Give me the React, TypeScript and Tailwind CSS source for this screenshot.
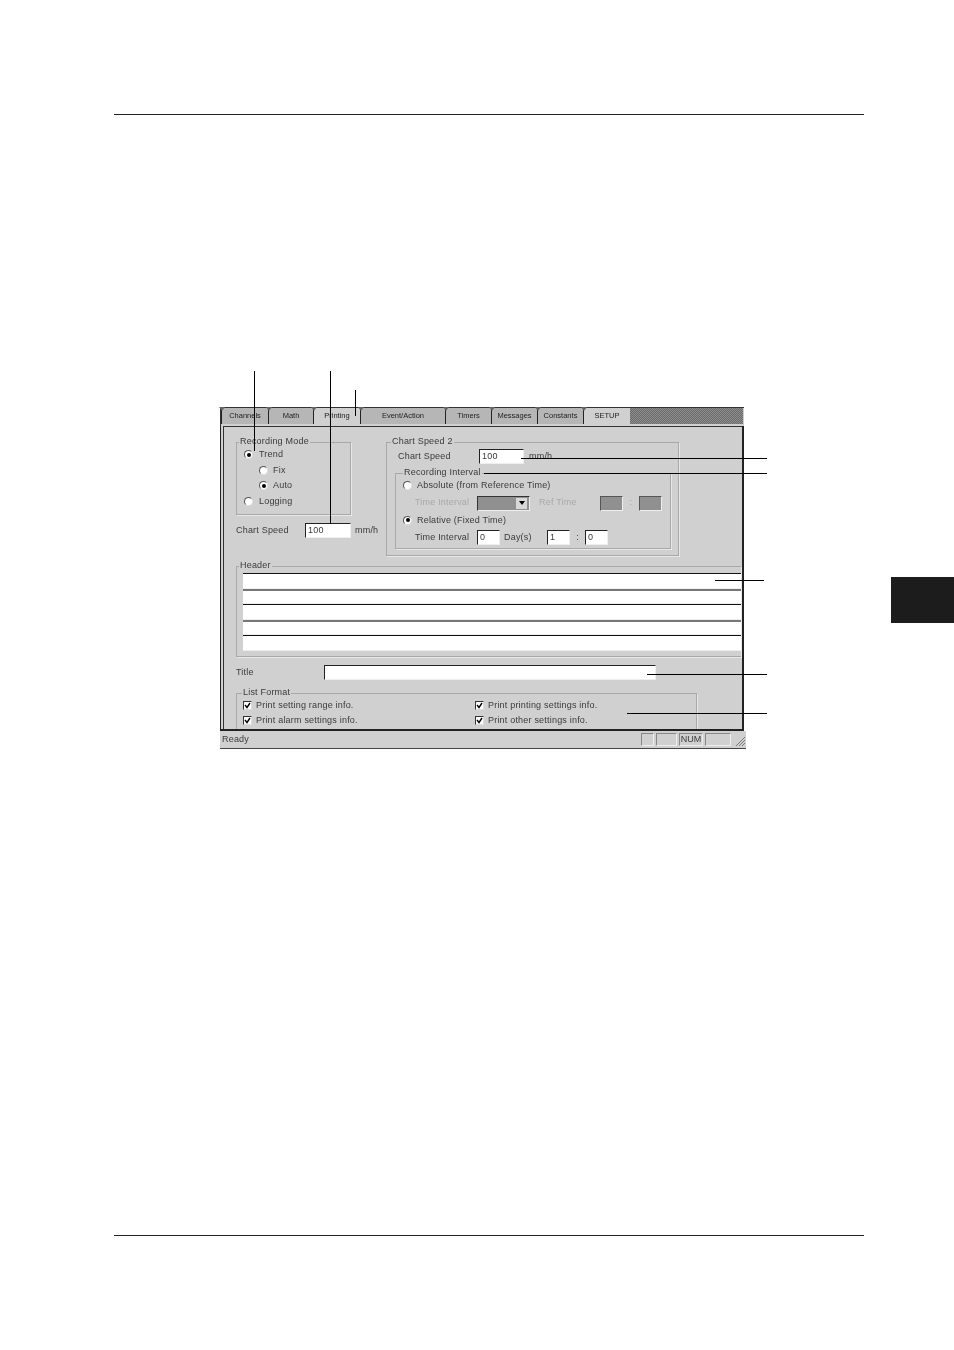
import type { ReactNode } from "react";

const tabs = [
  { label: "Channels", width: "w-[47px]", active: false },
  { label: "Math", width: "w-[45px]", active: false },
  { label: "Printing", width: "w-[47px]", active: true },
  { label: "Event/Action", width: "w-[85px]", active: false },
  { label: "Timers", width: "w-[46px]", active: false },
  { label: "Messages", width: "w-[46px]", active: false },
  { label: "Constants", width: "w-[46px]", active: false },
  { label: "SETUP", width: "w-[47px]", active: true },
];

function Radio({ checked = false }: { checked?: boolean }) {
  return (
    <span className="flex h-[9px] w-[9px] shrink-0 items-center justify-center rounded-full border border-[#555] border-r-[#ddd] border-b-[#ddd] bg-white">
      {checked && <span className="h-[4px] w-[4px] rounded-full bg-black" />}
    </span>
  );
}

function Check() {
  return (
    <span className="flex h-[9px] w-[9px] shrink-0 items-center justify-center border border-[#333] border-r-[#ddd] border-b-[#ddd] bg-white">
      <svg width="7" height="7" viewBox="0 0 7 7">
        <path d="M1 3 L3 5.5 L6 1" fill="none" stroke="#000" strokeWidth="1.4" />
      </svg>
    </span>
  );
}

function Field({ className, value }: { className: string; value?: string }) {
  return (
    <div
      className={`flex items-center border border-[#222] border-r-[#eee] border-b-[#eee] bg-white pl-[2px] ${className}`}
    >
      {value}
    </div>
  );
}

function Group({
  legend,
  className,
  legendClass,
  children,
}: {
  legend: string;
  className: string;
  legendClass: string;
  children?: ReactNode;
}) {
  return (
    <div className={`relative border border-[#a8a8a8] shadow-[1px_1px_0_#e8e8e8] ${className}`}>
      <span className={`absolute -top-[8px] bg-[#d0d0d0] px-[1px] leading-[12px] ${legendClass}`}>
        {legend}
      </span>
      {children}
    </div>
  );
}

function RadioRow({
  label,
  checked,
  className = "gap-[5px]",
}: {
  label: string;
  checked?: boolean;
  className?: string;
}) {
  return (
    <div className={`flex h-[15.5px] items-center ${className}`}>
      <Radio checked={checked} />
      <span>{label}</span>
    </div>
  );
}

function CheckRow({ label }: { label: string }) {
  return (
    <div className="flex h-[15px] items-center gap-[4px]">
      <Check />
      <span>{label}</span>
    </div>
  );
}

export default function App() {
  return (
    <div className="relative h-[1350px] w-[954px] overflow-hidden bg-white font-['Liberation_Sans',Arial,sans-serif]">
      <div className="mt-[114px] mr-[90px] ml-[114px] h-px bg-[#222]" />

      <div className="mt-[292px] flex items-start pl-[220px]">
        {/* Settings window */}
        <div className="flex h-[342px] w-[526px] flex-col text-[9px] tracking-[0.2px] text-[#3a3a3a] blur-[0.25px]">
          <div className="flex h-[19px] w-[524px] items-start border-t border-l border-[#333] bg-[#d0d0d0]">
            {tabs.map((tab) => (
              <div
                key={tab.label}
                className={`relative flex h-[16px] items-center justify-center border-l border-[#222] text-[7.5px] tracking-normal text-[#222] ${tab.width} ${
                  tab.active ? "bg-[#d0d0d0]" : "bg-[#b6b6b6]"
                }`}
              >
                <span className="absolute -top-px -left-[3px] h-0 w-0 border-x-[3px] border-t-[4px] border-x-transparent border-t-[#666]" />
                {tab.label}
              </div>
            ))}
            <div className="h-[16px] w-[113px] bg-[repeating-conic-gradient(#6c6c6c_0_25%,#8c8c8c_0_50%)] bg-[length:2px_2px]" />
          </div>

          <div className="h-[305px] w-[524px] overflow-hidden border-r-2 border-b-2 border-l border-[#222] bg-[#d0d0d0]">
            <div className="mt-[-1px] ml-[2px] h-[306px] border-t-2 border-l border-[#333] pt-[15px] pl-[12px]">
              <div className="flex items-start">
                {/* Left column */}
                <div className="w-[150px]">
                  <Group
                    legend="Recording Mode"
                    legendClass="left-[2px]"
                    className="h-[73px] w-[115px] pt-[4px] pl-[7px]"
                  >
                    <RadioRow label="Trend" checked className="gap-[6px]" />
                    <RadioRow label="Fix" className="gap-[5px] pl-[15px]" />
                    <RadioRow label="Auto" checked className="gap-[5px] pl-[15px]" />
                    <RadioRow label="Logging" className="gap-[6px]" />
                  </Group>
                  <div className="mt-[8px] flex h-[15px] items-center">
                    <span className="w-[69px]">Chart Speed</span>
                    <Field value="100" className="h-[15px] w-[46px]" />
                    <span className="ml-[4px]">mm/h</span>
                  </div>
                </div>

                {/* Right column */}
                <Group
                  legend="Chart Speed 2"
                  legendClass="left-[4px]"
                  className="h-[114px] w-[293px] pt-[6px] pl-[8px]"
                >
                  <div className="flex h-[15px] items-center pl-[3px]">
                    <span className="w-[81px]">Chart Speed</span>
                    <Field value="100" className="h-[15px] w-[45px]" />
                    <span className="ml-[5px]">mm/h</span>
                  </div>
                  <Group
                    legend="Recording Interval"
                    legendClass="left-[7px]"
                    className="mt-[9px] h-[76px] w-[276px] pt-[4px] pl-[7px]"
                  >
                    <div className="flex flex-col gap-[2px]">
                      <RadioRow label="Absolute (from Reference Time)" />
                      <div className="flex h-[15px] items-center pl-[12px] text-[#a8a8a8]">
                        <span className="w-[62px]">Time Interval</span>
                        <div className="flex h-[15px] w-[53px] items-center justify-end border border-[#333] border-r-[#eee] border-b-[#eee] bg-[#909090] pr-[2px]">
                          <span className="flex h-[11px] w-[11px] items-center justify-center bg-[#d8d8d8]">
                            <span className="h-0 w-0 border-x-[3px] border-t-[4px] border-x-transparent border-t-black" />
                          </span>
                        </div>
                        <span className="ml-[9px] w-[61px]">Ref Time</span>
                        <div className="h-[15px] w-[23px] border border-[#555] border-r-[#eee] border-b-[#eee] bg-[#909090]" />
                        <span className="w-[16px] text-center">:</span>
                        <div className="h-[15px] w-[23px] border border-[#555] border-r-[#eee] border-b-[#eee] bg-[#909090]" />
                      </div>
                      <RadioRow label="Relative (Fixed Time)" checked />
                      <div className="flex h-[15px] items-center pl-[12px]">
                        <span className="w-[62px]">Time Interval</span>
                        <Field value="0" className="h-[15px] w-[23px]" />
                        <span className="ml-[4px] w-[43px]">Day(s)</span>
                        <Field value="1" className="h-[15px] w-[23px]" />
                        <span className="w-[15px] text-center">:</span>
                        <Field value="0" className="h-[15px] w-[23px]" />
                      </div>
                    </div>
                  </Group>
                </Group>
              </div>

              {/* Header lines */}
              <Group
                legend="Header"
                legendClass="left-[2px]"
                className="mt-[10px] h-[91px] w-[505px] border-r-0 pt-[6px] pl-[6px]"
              >
                <div className="flex flex-col">
                  <div className="h-[15.5px] border-t border-b border-t-[#111] border-b-[#eee] bg-white" />
                  <div className="h-[15.5px] border-t-2 border-b border-t-[#777] border-b-[#eee] bg-white" />
                  <div className="h-[15.5px] border-t border-b border-t-[#111] border-b-[#eee] bg-white" />
                  <div className="h-[15.5px] border-t-2 border-b border-t-[#777] border-b-[#eee] bg-white" />
                  <div className="h-[15.5px] border-t border-b border-t-[#111] border-b-[#eee] bg-white" />
                </div>
              </Group>

              <div className="mt-[8px] flex h-[15px] items-center">
                <span className="w-[88px] pt-[1px]">Title</span>
                <Field className="h-[15px] w-[332px]" />
              </div>

              {/* List format */}
              <Group
                legend="List Format"
                legendClass="left-[5px]"
                className="mt-[13px] h-[40px] w-[461px] pt-[4px] pl-[6px]"
              >
                <div className="grid grid-cols-[232px_1fr]">
                  <CheckRow label="Print setting range info." />
                  <CheckRow label="Print printing settings info." />
                  <CheckRow label="Print alarm settings info." />
                  <CheckRow label="Print other settings info." />
                </div>
              </Group>
            </div>
          </div>

          {/* Status bar */}
          <div className="flex h-[18px] items-center border-b border-[#444] bg-[#d0d0d0] pr-[1px] pl-[2px]">
            <span className="flex-1">Ready</span>
            <div className="flex items-center gap-[2px]">
              <div className="h-[13px] w-[13px] border border-[#888] border-r-[#eee] border-b-[#eee]" />
              <div className="h-[13px] w-[21px] border border-[#888] border-r-[#eee] border-b-[#eee]" />
              <div className="flex h-[13px] w-[24px] items-center justify-center border border-[#888] border-r-[#eee] border-b-[#eee] tracking-normal">
                NUM
              </div>
              <div className="h-[13px] w-[26px] border border-[#888] border-r-[#eee] border-b-[#eee]" />
              <svg width="12" height="12" viewBox="0 0 12 12">
                <path d="M3 12 L12 3 M6 12 L12 6 M9 12 L12 9" stroke="#777" strokeWidth="1" />
              </svg>
            </div>
          </div>
        </div>

        {/* Chapter tab */}
        <div className="mt-[170px] ml-[145px] h-[46px] w-[63px] bg-[#1c1c1c]" />
      </div>

      <div className="mt-[486px] mr-[90px] ml-[114px] h-px bg-[#222]" />

      {/* Callout lines */}
      <div className="absolute top-[371px] left-[254px] h-[80px] w-px bg-black" />
      <div className="absolute top-[371px] left-[330px] h-[153px] w-px bg-black" />
      <div className="absolute top-[390px] left-[355px] h-[26px] w-px bg-black" />
      <div className="absolute top-[458px] left-[521px] h-px w-[246px] bg-black" />
      <div className="absolute top-[473px] left-[484px] h-px w-[283px] bg-black" />
      <div className="absolute top-[580px] left-[715px] h-px w-[49px] bg-black" />
      <div className="absolute top-[674px] left-[647px] h-px w-[120px] bg-black" />
      <div className="absolute top-[713px] left-[627px] h-px w-[140px] bg-black" />
    </div>
  );
}
